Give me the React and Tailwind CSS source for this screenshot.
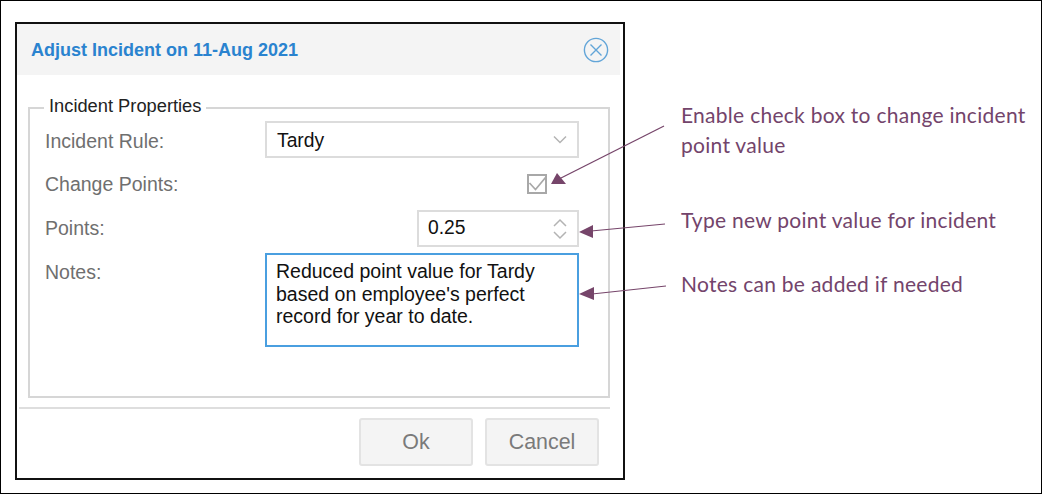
const LABEL = "w-[220px] shrink-0 text-[19.5px] text-[#6f6f6f]";

const Field = ({ label, labelClass = "", className = "", children }) => (
  <div className={`flex items-center ${className}`}>
    <span className={`${LABEL} ${labelClass}`}>{label}</span>
    <div className="flex flex-1 justify-end">{children}</div>
  </div>
);

const Callout = ({ className, children }) => (
  <p className={`absolute left-[680px] font-['Lato',sans-serif] text-[21px] leading-[30px] tracking-[0.28px] text-[#73446b] ${className}`}>
    {children}
  </p>
);

const Arrows = () => (
  <svg className="pointer-events-none absolute left-0 top-0" width="1042" height="494" fill="none">
    <g stroke="#76456a" strokeWidth="1.25">
      <path d="M663 125 L558 178" />
      <path d="M664 223 L590 230" />
      <path d="M665 285 L591 293" />
    </g>
    <g fill="#76456a">
      <path d="M550 183 L556 172 L565 183 Z" />
      <path d="M578 231 L592 224 L592 237 Z" />
      <path d="M578 293 L593 286 L593 299 Z" />
    </g>
  </svg>
);

export default function App() {
  return (
    <div className="relative h-[494px] w-[1042px] overflow-hidden border border-black bg-white pl-[14px] pt-[21px] font-['Liberation_Sans',Arial,sans-serif]">
      {/* dialog */}
      <div className="flex h-[458px] w-[610px] flex-col border-2 border-[#111] bg-white pb-[2px]">
        <div className="mr-[3px] flex h-[51px] shrink-0 items-center justify-between bg-[#f4f4f4] pl-[14px] pr-[11px]">
          <h2 className="pt-[2px] text-[18px] font-bold text-[#2a83cf]">Adjust Incident on 11-Aug 2021</h2>
          <svg width="26" height="26" viewBox="0 0 26 26" fill="none" stroke="#62a5d8" strokeWidth="1.4">
            <circle cx="13" cy="13" r="11.6" />
            <path d="M7.5 7.5 L18.5 18.5 M18.5 7.5 L7.5 18.5" />
          </svg>
        </div>

        <div className="relative ml-[11px] mr-[13px] mt-[32px] flex h-[291px] shrink-0 flex-col border-2 border-[#d6d6d6] pl-[15px] pr-[29px] pt-[12px]">
          <span className="absolute left-[14px] top-[-13px] bg-white px-[5px] text-[18.3px] leading-[20px] text-[#222]">
            Incident Properties
          </span>

          <Field label="Incident Rule:" labelClass="pt-[4px]" className="h-[37px]">
            <div className="flex h-[37px] w-full items-center justify-between border-2 border-[#dcdcdc] pl-[10px] pr-[10px] text-[19.3px] text-[#111]">
              <span className="pt-[4px]">Tardy</span>
              <svg width="14" height="9" viewBox="0 0 14 9" fill="none" stroke="#b3b3b3" strokeWidth="1.5">
                <path d="M1 1.5 L7 7.5 L13 1.5" />
              </svg>
            </div>
          </Field>

          <Field label="Change Points:" labelClass="pt-[2px]" className="mt-[16px] h-[20px]">
            <div className="mr-[32px] flex h-[20px] w-[20px] items-center justify-center border-2 border-[#a8a8a8]">
              <svg width="18" height="16" viewBox="0 0 18 16" fill="none" stroke="#a8a8a8" strokeWidth="1.7" className="shrink-0">
                <path d="M1.5 7 L7.5 13.5 L17.5 1.5" />
              </svg>
            </div>
          </Field>

          <Field label="Points:" className="mt-[16px] h-[37px]">
            <div className="flex h-[37px] w-[162px] items-center justify-between border-2 border-[#dcdcdc] pl-[9px] pr-[10px] text-[19.3px] text-[#111]">
              0.25
              <svg width="14" height="24" viewBox="0 0 14 24" fill="none" stroke="#b3b3b3" strokeWidth="1.5">
                <path d="M1 9 L7 3 L13 9 M1 15 L7 21 L13 15" />
              </svg>
            </div>
          </Field>

          <div className="mt-[6px] flex">
            <span className={`${LABEL} pt-[5px]`}>Notes:</span>
            <div className="h-[94px] flex-1 border-2 border-[#4a9fe0] px-[9px] pt-[5px] text-[19.5px] leading-[22.5px] text-[#111]">
              Reduced point value for Tardy
              <br />
              based on employee's perfect
              <br />
              record for year to date.
            </div>
          </div>
        </div>

        <div className="ml-[2px] mr-[13px] mt-[9px] h-[2px] shrink-0 bg-[#dedede]" />

        <div className="mr-[24px] mt-[9px] flex justify-end gap-[12px]">
          <button className="h-[48px] w-[114px] rounded-[3px] border-2 border-[#e3e3e3] bg-[#f4f4f4] text-[21.4px] text-[#7a7a7a]">Ok</button>
          <button className="h-[48px] w-[114px] rounded-[3px] border-2 border-[#e3e3e3] bg-[#f4f4f4] text-[21.4px] text-[#7a7a7a]">Cancel</button>
        </div>
      </div>

      <Arrows />
      <Callout className="top-[99px]">
        Enable check box to change incident
        <br />
        point value
      </Callout>
      <Callout className="top-[204px]">Type new point value for incident</Callout>
      <Callout className="top-[268px]">Notes can be added if needed</Callout>
    </div>
  );
}
